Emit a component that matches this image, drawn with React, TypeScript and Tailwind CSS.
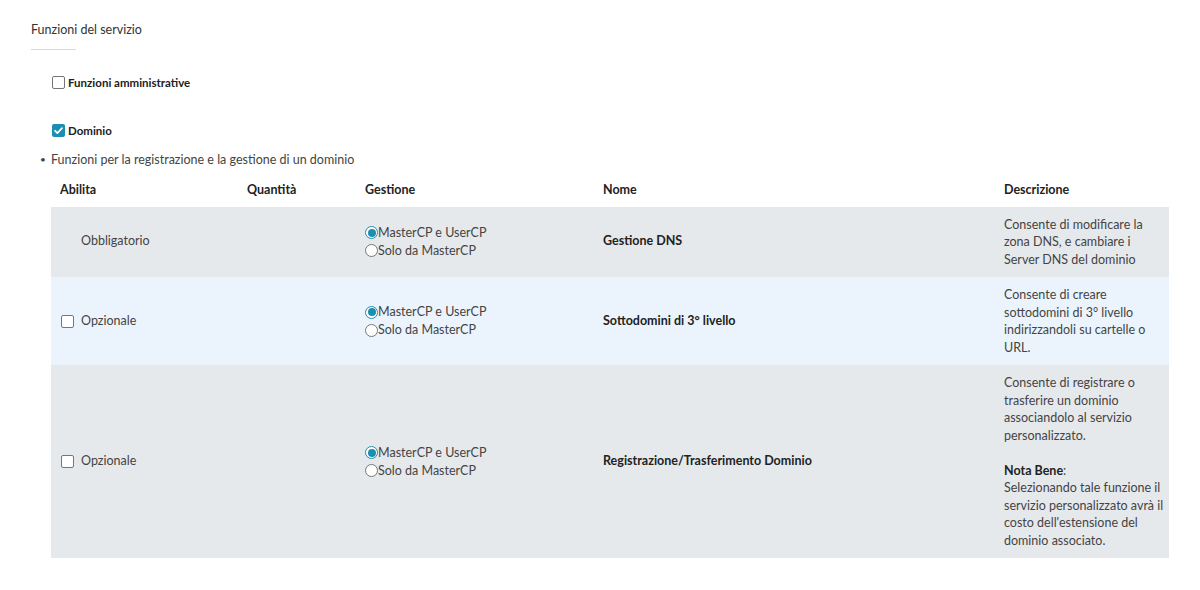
import React from "react";

const font = { fontFamily: "Lato, 'Noto Sans', sans-serif" };

function Box({ checked = false }: { checked?: boolean }) {
  if (checked)
    return (
      <span className="inline-flex h-[13px] w-[13px] items-center justify-center rounded-[2px] bg-[#1b8fb3]">
        <svg viewBox="0 0 12 12" className="h-[11px] w-[11px]">
          <path d="M2.3 6.3 4.8 8.8 9.8 3.4" fill="none" stroke="#fff" strokeWidth="1.9" strokeLinecap="round" strokeLinejoin="round" />
        </svg>
      </span>
    );
  return <span className="inline-block h-[13px] w-[13px] rounded-[2px] border border-[#767676] bg-white" />;
}

function Radio({ checked = false }: { checked?: boolean }) {
  return checked ? (
    <span className="inline-flex h-[13px] w-[13px] items-center justify-center rounded-full border-[1.5px] border-[#1b8fb3] bg-white">
      <span className="h-[8px] w-[8px] rounded-full bg-[#1b8fb3]" />
    </span>
  ) : (
    <span className="inline-block h-[13px] w-[13px] rounded-full border border-[#767676] bg-white" />
  );
}

function Gestione() {
  return (
    <div className="flex flex-col text-[12.5px] leading-[18px] text-[#444]">
      <label className="flex items-center">
        <Radio checked />
        <span>MasterCP e UserCP</span>
      </label>
      <label className="flex items-center">
        <Radio />
        <span>Solo da MasterCP</span>
      </label>
    </div>
  );
}

type Row = {
  mandatory: boolean;
  nome: string;
  bg: string;
  desc: React.ReactNode;
};

const rows: Row[] = [
  {
    mandatory: true,
    nome: "Gestione DNS",
    bg: "bg-[#e6e9ec]",
    desc: "Consente di modificare la zona DNS, e cambiare i Server DNS del dominio",
  },
  {
    mandatory: false,
    nome: "Sottodomini di 3° livello",
    bg: "bg-[#ebf4fd]",
    desc: "Consente di creare sottodomini di 3° livello indirizzandoli su cartelle o URL.",
  },
  {
    mandatory: false,
    nome: "Registrazione/Trasferimento Dominio",
    bg: "bg-[#e6e9ec]",
    desc: (
      <>
        Consente di registrare o trasferire un dominio associandolo al servizio personalizzato.
        <br />
        <br />
        <b className="font-bold text-[#222]">Nota Bene</b>:
        <br />
        Selezionando tale funzione il servizio personalizzato avrà il costo dell'estensione del dominio associato.
      </>
    ),
  },
];

export default function App() {
  return (
    <div className="h-[590px] w-[1200px] bg-white px-[31px] pt-[21px] text-[#333]" style={font}>
      <h3 className="text-[12.5px] leading-[17px] text-[#333]">Funzioni del servizio</h3>
      <div className="mt-[11px] h-px w-[45px] bg-[#d9d9d9]" />

      <div className="mt-[24px] pl-[21px]">
        <label className="flex items-center gap-[3px] text-[11.5px] font-bold text-[#222]">
          <Box />
          Funzioni amministrative
        </label>
        <label className="mt-[31px] flex items-center gap-[3px] text-[11.5px] font-bold text-[#222]">
          <Box checked />
          Dominio
        </label>
      </div>

      <div className="mt-[11px] flex items-center pl-[9px] text-[12.5px] leading-[17px] text-[#444]">
        <span className="w-[11px] text-[10px]">•</span>
        <span>Funzioni per la registrazione e la gestione di un dominio</span>
      </div>

      <table className="ml-[20px] mt-[6px] w-[1118px] table-fixed border-collapse text-left text-[12.5px]">
        <colgroup>
          <col className="w-[187px]" />
          <col className="w-[118px]" />
          <col className="w-[238px]" />
          <col className="w-[401px]" />
          <col className="w-[174px]" />
        </colgroup>
        <thead>
          <tr className="h-[33px] text-[#222]">
            <th className="px-[9px] font-bold">Abilita</th>
            <th className="px-[9px] font-bold">Quantità</th>
            <th className="px-[9px] font-bold">Gestione</th>
            <th className="px-[9px] font-bold">Nome</th>
            <th className="px-[9px] font-bold">Descrizione</th>
          </tr>
        </thead>
        <tbody>
          {rows.map((r) => (
            <tr key={r.nome} className={r.bg}>
              <td className="px-[10px] align-middle text-[#444]">
                <div className="flex items-center gap-[7px]">
                  {r.mandatory ? <span className="w-[13px]" /> : <Box />}
                  <span>{r.mandatory ? "Obbligatorio" : "Opzionale"}</span>
                </div>
              </td>
              <td className="px-[9px]" />
              <td className="px-[9px] align-middle">
                <Gestione />
              </td>
              <td className="px-[9px] align-middle font-bold text-[#222]">{r.nome}</td>
              <td className="py-[9px] pl-[9px] pr-[2px] align-middle leading-[17.5px] text-[#444]">{r.desc}</td>
            </tr>
          ))}
        </tbody>
      </table>
    </div>
  );
}
